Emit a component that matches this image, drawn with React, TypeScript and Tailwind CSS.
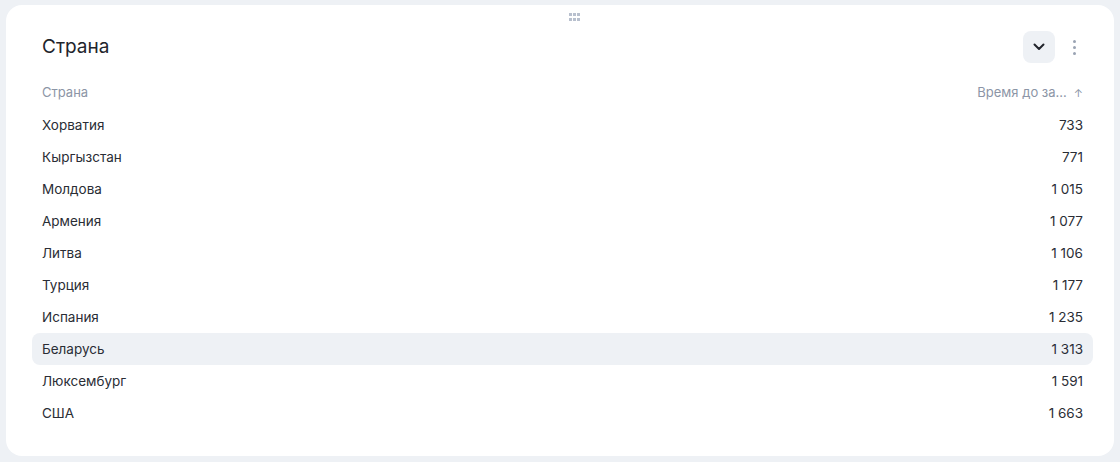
import React from "react";

const rows: [string, string][] = [
  ["Хорватия", "733"],
  ["Кыргызстан", "771"],
  ["Молдова", "1 015"],
  ["Армения", "1 077"],
  ["Литва", "1 106"],
  ["Турция", "1 177"],
  ["Испания", "1 235"],
  ["Беларусь", "1 313"],
  ["Люксембург", "1 591"],
  ["США", "1 663"],
];

const App = () => {
  return (
    <div
      className="w-[1120px] h-[462px] bg-[#eef1f5] pt-[5px] pl-[6px] pr-[6px] overflow-hidden"
      style={{ fontFamily: "Inter, 'Noto Sans', sans-serif" }}
    >
      <div className="relative h-[451px] bg-white rounded-[16px] pl-[26px] pr-[21px] text-[#2a2d35]">
        {/* drag handle */}
        <div className="absolute left-[563px] top-[8px] grid grid-cols-3 gap-x-[1px] gap-y-[2px]">
          {[0, 1, 2, 3, 4, 5].map((i) => (
            <span key={i} className="block w-[3px] h-[3px] bg-[#b8c0ce]" />
          ))}
        </div>

        <div className="h-[72px] pt-[26px]">
          <div className="flex items-center justify-between h-[32px]">
            <div className="pl-[10px] text-[19px] leading-[24px] font-normal text-[#21242b]">Страна</div>
            <div className="flex items-center">
              <button className="w-[32px] h-[32px] rounded-[8px] bg-[#eef1f5] flex items-center justify-center">
                <svg width="12" height="8" viewBox="0 0 12 8" fill="none">
                  <path d="M1.5 1.5 6 6l4.5-4.5" stroke="#21242b" strokeWidth="2" strokeLinecap="round" strokeLinejoin="round" />
                </svg>
              </button>
              <div className="w-[38px] flex flex-col items-center gap-[3px]">
                <span className="block w-[3px] h-[3px] rounded-full bg-[#9aa3b3]" />
                <span className="block w-[3px] h-[3px] rounded-full bg-[#9aa3b3]" />
                <span className="block w-[3px] h-[3px] rounded-full bg-[#9aa3b3]" />
              </div>
            </div>
          </div>
        </div>

        <div className="flex items-center justify-between h-[32px] px-[10px] text-[13px] text-[#8c95a6]">
          <span>Страна</span>
          <span className="flex items-center gap-[7px]">
            Время до за...
            <span className="text-[11px]">↑</span>
          </span>
        </div>
        {rows.map(([name, val]) => (
          <div
            key={name}
            className={
              "flex items-center justify-between h-[32px] px-[10px] text-[13.5px] rounded-[8px] " +
              (name === "Беларусь" ? "bg-[#eef1f5]" : "")
            }
          >
            <span>{name}</span>
            <span>{val}</span>
          </div>
        ))}
      </div>
    </div>
  );
};

export default App;
